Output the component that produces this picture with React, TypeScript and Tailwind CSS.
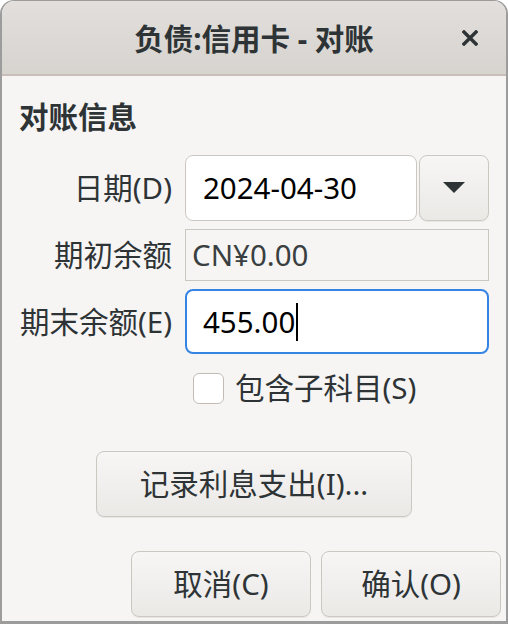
import React from "react";

const btn =
  "rounded-[8px] border border-[#cdc7c2] bg-gradient-to-b from-[#f7f6f5] to-[#ebe9e6] shadow-[0_1px_0_rgba(0,0,0,0.06)] flex items-center justify-center whitespace-nowrap";

function Label({ children }: { children: React.ReactNode }) {
  return (
    <div className="w-[153px] shrink-0 flex justify-end whitespace-nowrap">
      <span className="shrink-0">{children}</span>
    </div>
  );
}

export default function App() {
  return (
    <div className="w-[508px] h-[624px] bg-[#f6f5f4] font-['Noto_Sans','Noto_Sans_CJK_SC',sans-serif] text-[#2e3436] text-[29.5px] leading-none flex flex-col border-x-2 border-t border-b-[3px] border-[#9c9c9c] rounded-t-[14px] overflow-hidden">
      <header className="h-[75px] shrink-0 relative flex items-center justify-center bg-gradient-to-b from-[#e2dfdc] to-[#d7d3cf] border-b-2 border-[#c6beb7]">
        <span className="font-bold pt-[2px] whitespace-nowrap">负债:信用卡 - 对账</span>
        <div className="absolute right-[28px] top-[29px] w-[16px] h-[16px]">
          <svg viewBox="0 0 16 16" width="16" height="16">
            <path d="M2 2 L14 14 M14 2 L2 14" stroke="#2e3436" strokeWidth="3.4" strokeLinecap="square" fill="none" />
          </svg>
        </div>
      </header>
      <main className="flex flex-col px-[17px] pt-[20px]">
        <div className="h-[40px] flex items-center font-bold pt-[2px]">对账信息</div>
        <div className="mt-[19px] h-[66px] flex items-center">
          <Label>日期(D)</Label>
          <div className="ml-[13px] flex-1 flex h-full gap-[2px]">
            <div className="w-[232px] h-full bg-white border border-[#cdc7c2] rounded-[8px] flex items-center pl-[17px] text-black">
              2024-04-30
            </div>
            <div className={"flex-1 h-full " + btn}>
              <svg width="22" height="12" viewBox="0 0 22 12">
                <path d="M0 0 H22 L11 11 Z" fill="#2e3436" />
              </svg>
            </div>
          </div>
        </div>
        <div className="mt-[8px] h-[52px] flex items-center">
          <Label>期初余额</Label>
          <div className="ml-[13px] flex-1 h-full border border-[#cdc7c2] flex items-center pl-[6px] text-[#3a3f41]">
            CN¥0.00
          </div>
        </div>
        <div className="mt-[8px] h-[65px] flex items-center">
          <Label>期末余额(E)</Label>
          <div className="ml-[13px] flex-1 h-full bg-white border-2 border-[#3584e4] rounded-[8px] flex items-center pl-[16px] text-black">
            <span>455.00</span>
            <span className="w-[2px] h-[38px] bg-black ml-[1px]" />
          </div>
        </div>
        <div className="mt-[18px] h-[32px] flex items-center pl-[174px]">
          <div className="w-[31px] h-[31px] bg-white border border-[#c3bcb5] rounded-[6px]" />
          <span className="ml-[11px] whitespace-nowrap">包含子科目(S)</span>
        </div>
        <div className="mt-[47px] flex justify-center">
          <div className={"w-[316px] h-[66px] " + btn}>记录利息支出(I)...</div>
        </div>
      </main>
      <div className="flex-1" />
      <footer className="flex justify-end gap-[10px] pr-[5px] pb-[4px]">
        <div className={"w-[180px] h-[66px] " + btn}>取消(C)</div>
        <div className={"w-[180px] h-[66px] " + btn}>确认(O)</div>
      </footer>
    </div>
  );
}
